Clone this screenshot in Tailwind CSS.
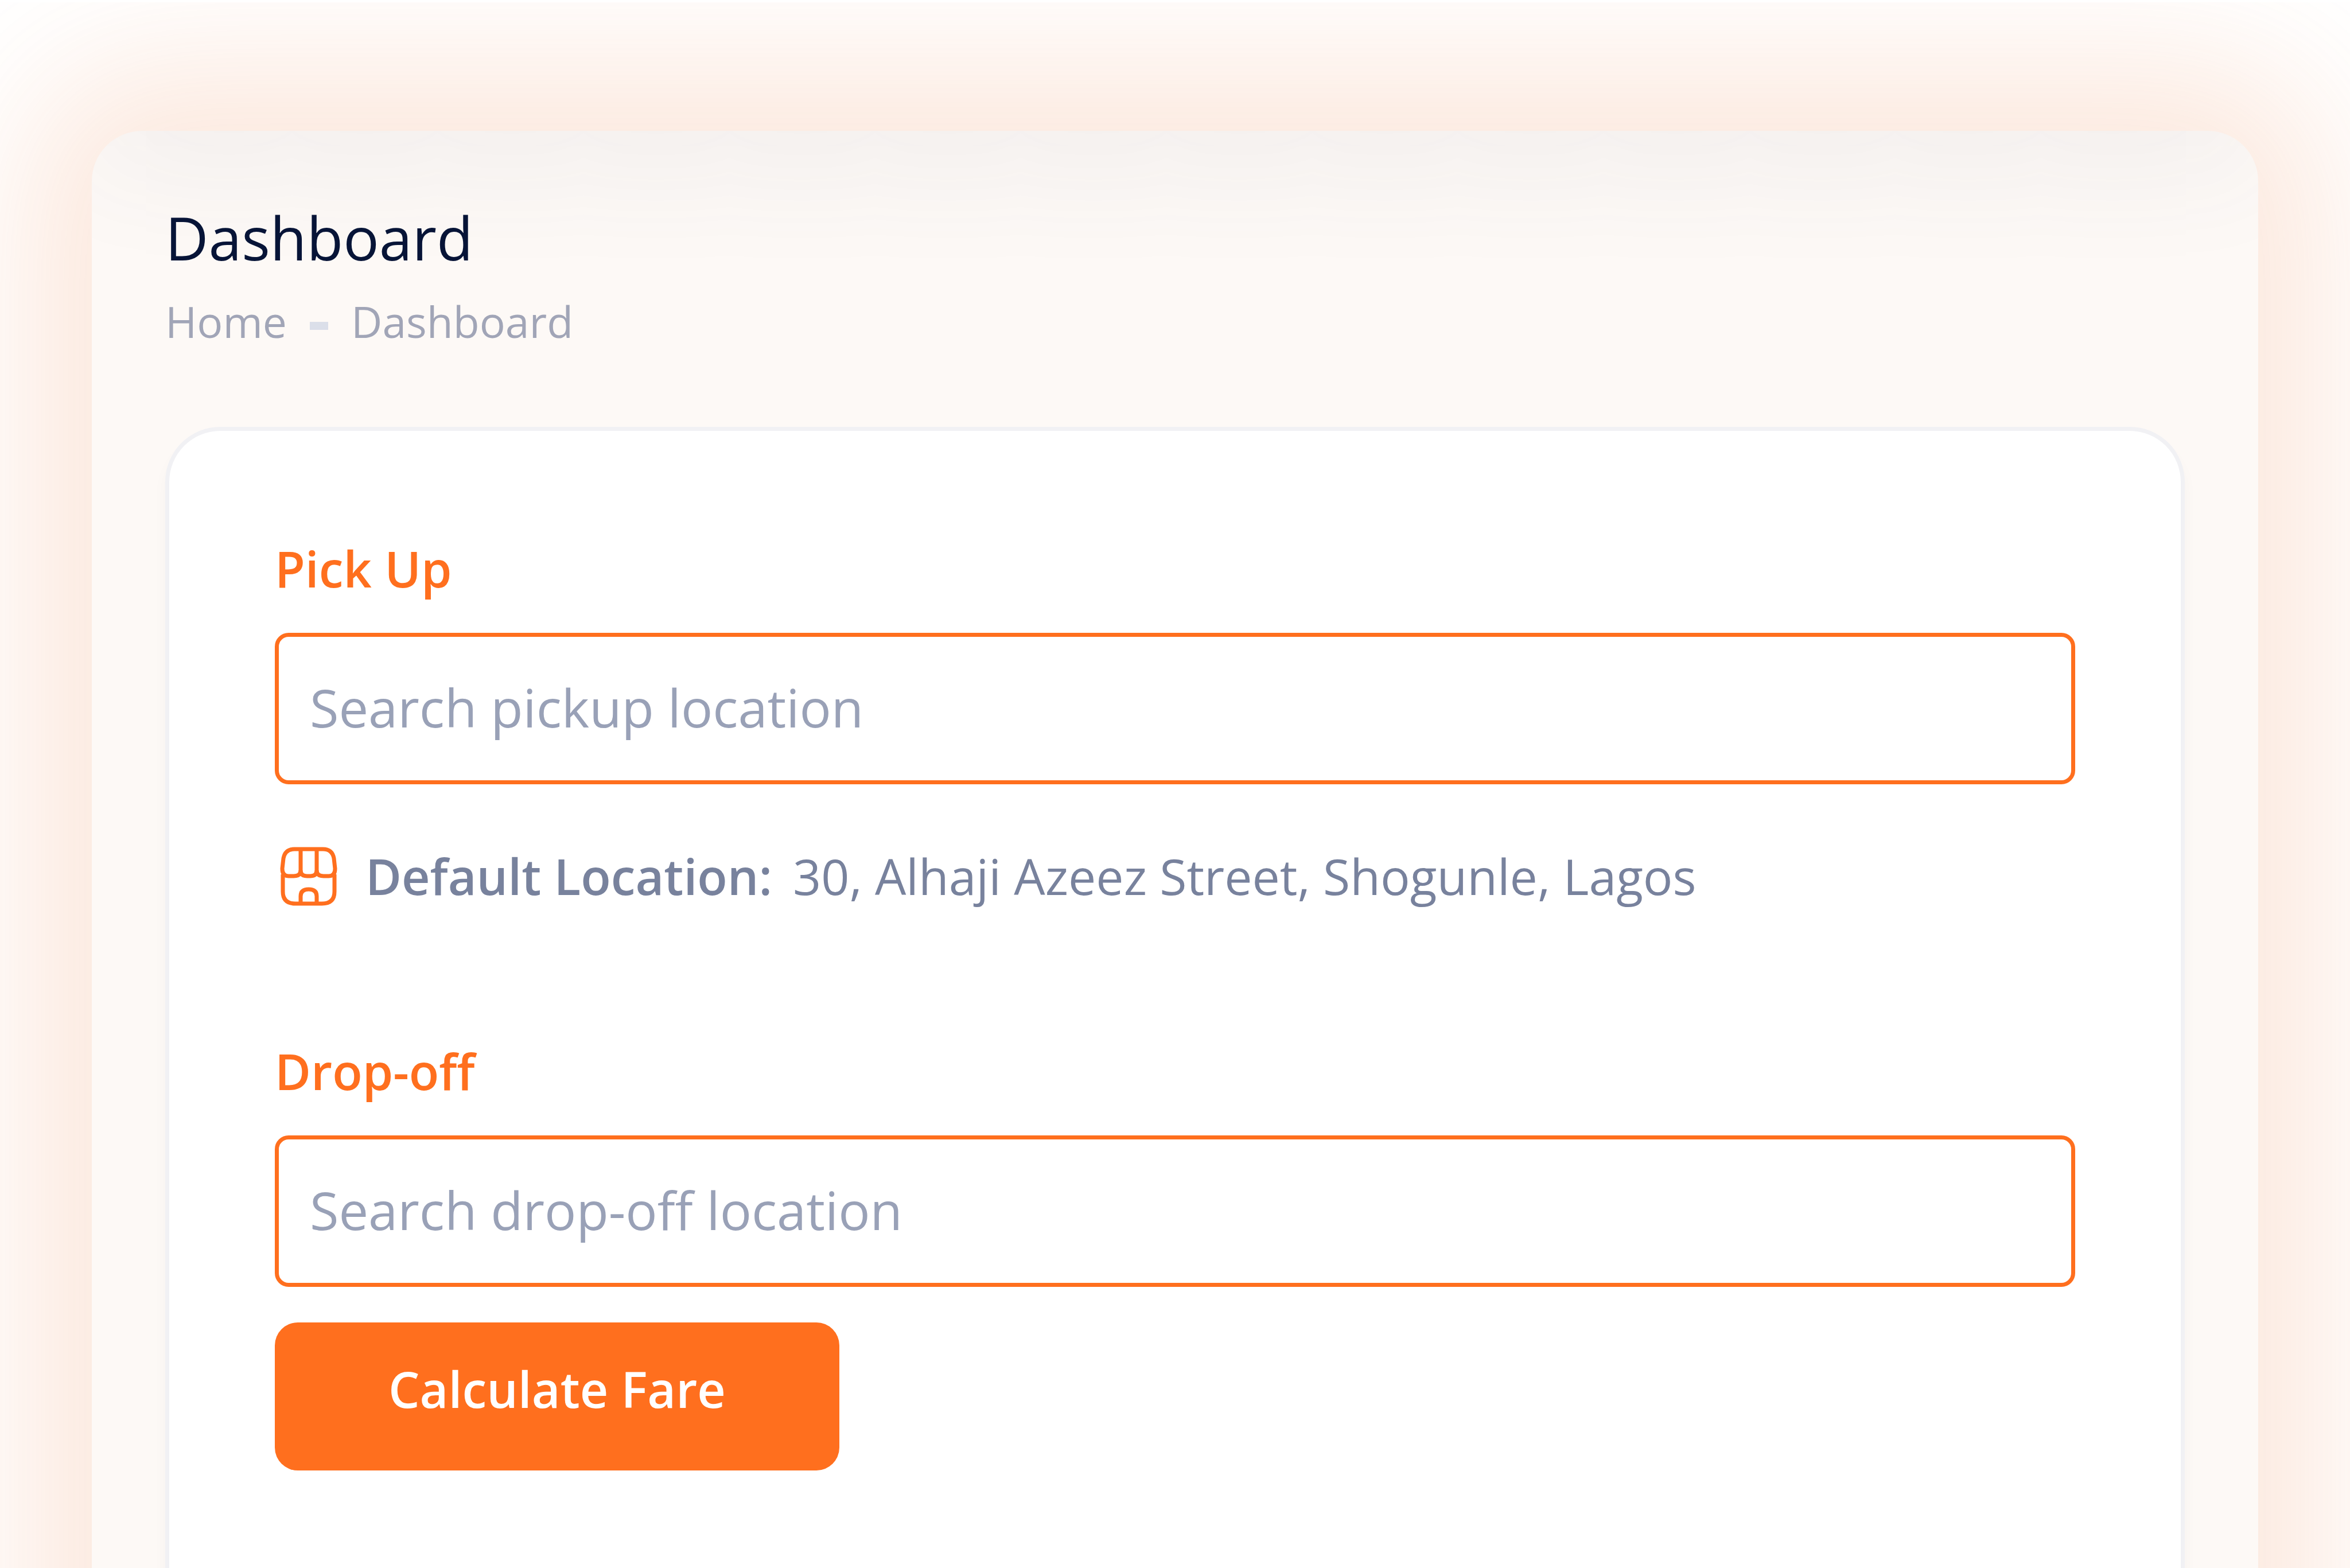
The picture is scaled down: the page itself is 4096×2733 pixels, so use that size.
<!DOCTYPE html>
<html lang="en">
<head>
<meta charset="utf-8">
<title>Dashboard</title>
<script src="https://cdn.jsdelivr.net/npm/@tailwindcss/browser@4"></script>
</head>
<body class="bg-white font-['Open_Sans',sans-serif]">
<div class="flex h-screen flex-col overflow-hidden border-t-4 border-white">
  <main class="relative mx-40 mt-56 -mb-[600px] flex flex-1 flex-col rounded-t-[88px] bg-[#fdf9f6] px-32 pt-[126px] shadow-[0_0_400px_112px_rgba(234,116,46,0.165)]">
    <!-- soft shade that the top bar casts on the panel -->
    <div class="pointer-events-none absolute inset-0 overflow-hidden rounded-t-[88px]" aria-hidden="true">
      <div class="absolute inset-x-0 bottom-full h-[400px] shadow-[0_68px_204px_0_rgba(82,70,100,0.065)]"></div>
    </div>

    <header class="relative">
      <h1 class="text-[104px] leading-[120px] font-medium text-[#071437]">Dashboard</h1>
      <nav aria-label="Breadcrumb" class="mt-9">
        <ol class="flex items-center text-[75px] leading-[100px] font-medium text-[#a1a5b7]">
          <li><a href="#">Home</a></li>
          <li class="mx-10 mt-4 h-3.5 w-8 bg-[#dbdfe9]" aria-hidden="true"></li>
          <li>Dashboard</li>
        </ol>
      </nav>
    </header>

    <section class="relative mt-[134px] flex-1 rounded-t-[96px] border-x-[7px] border-t-[7px] border-[#f1f1f4] bg-white px-[184px] pt-[184px] shadow-[0_20px_27px_0_rgba(0,0,0,0.03)]">
      <form>
        <label for="pickup" class="block text-[86px] leading-[112px] font-semibold text-[#ff6f1e]">Pick Up</label>
        <input id="pickup" type="text" placeholder="Search pickup location" class="mt-14 block h-[264px] w-full rounded-3xl border-[7px] border-[#ff6f1e] bg-white px-[54px] pb-1.5 text-[92px] font-medium placeholder:text-[#99a1b7]">

        <p class="mt-24 flex items-center text-[86px] leading-[128px] text-[#78829d]">
          <svg class="ml-2 h-[103px] w-[102px]" viewBox="0 0 102 103" fill="none" stroke="#ff6f1e" stroke-width="7" aria-hidden="true">
            <path d="M26 4H76Q92 4 95 20L97 38Q97 51 86 51H77Q65 51 65 41Q65 51 54 51H48Q37 51 37 41Q37 51 25 51H16Q5 51 5 38L7 20Q10 4 26 4Z"/>
            <path d="M37 4V43M65 4V43"/>
            <path d="M6 48V78Q6 99 28 99H74Q96 99 96 78V48"/>
            <path d="M37 99V86Q37 74 51 74Q65 74 65 86V99"/>
          </svg>
          <span class="ml-12 font-semibold">Default Location:</span>
          <span class="ml-9">30, Alhaji Azeez Street, Shogunle, Lagos</span>
        </p>

        <label for="dropoff" class="mt-[220px] block text-[86px] leading-[112px] font-semibold text-[#ff6f1e]">Drop-off</label>
        <input id="dropoff" type="text" placeholder="Search drop-off location" class="mt-14 block h-[264px] w-full rounded-3xl border-[7px] border-[#ff6f1e] bg-white px-[54px] pb-1.5 text-[92px] font-medium placeholder:text-[#99a1b7]">

        <button type="button" class="mt-[62px] block h-[258px] w-[984px] rounded-[40px] bg-[#ff6f1e] pb-7 text-[86px] font-semibold text-white">Calculate Fare</button>
      </form>
    </section>
  </main>
</div>
</body>
</html>
